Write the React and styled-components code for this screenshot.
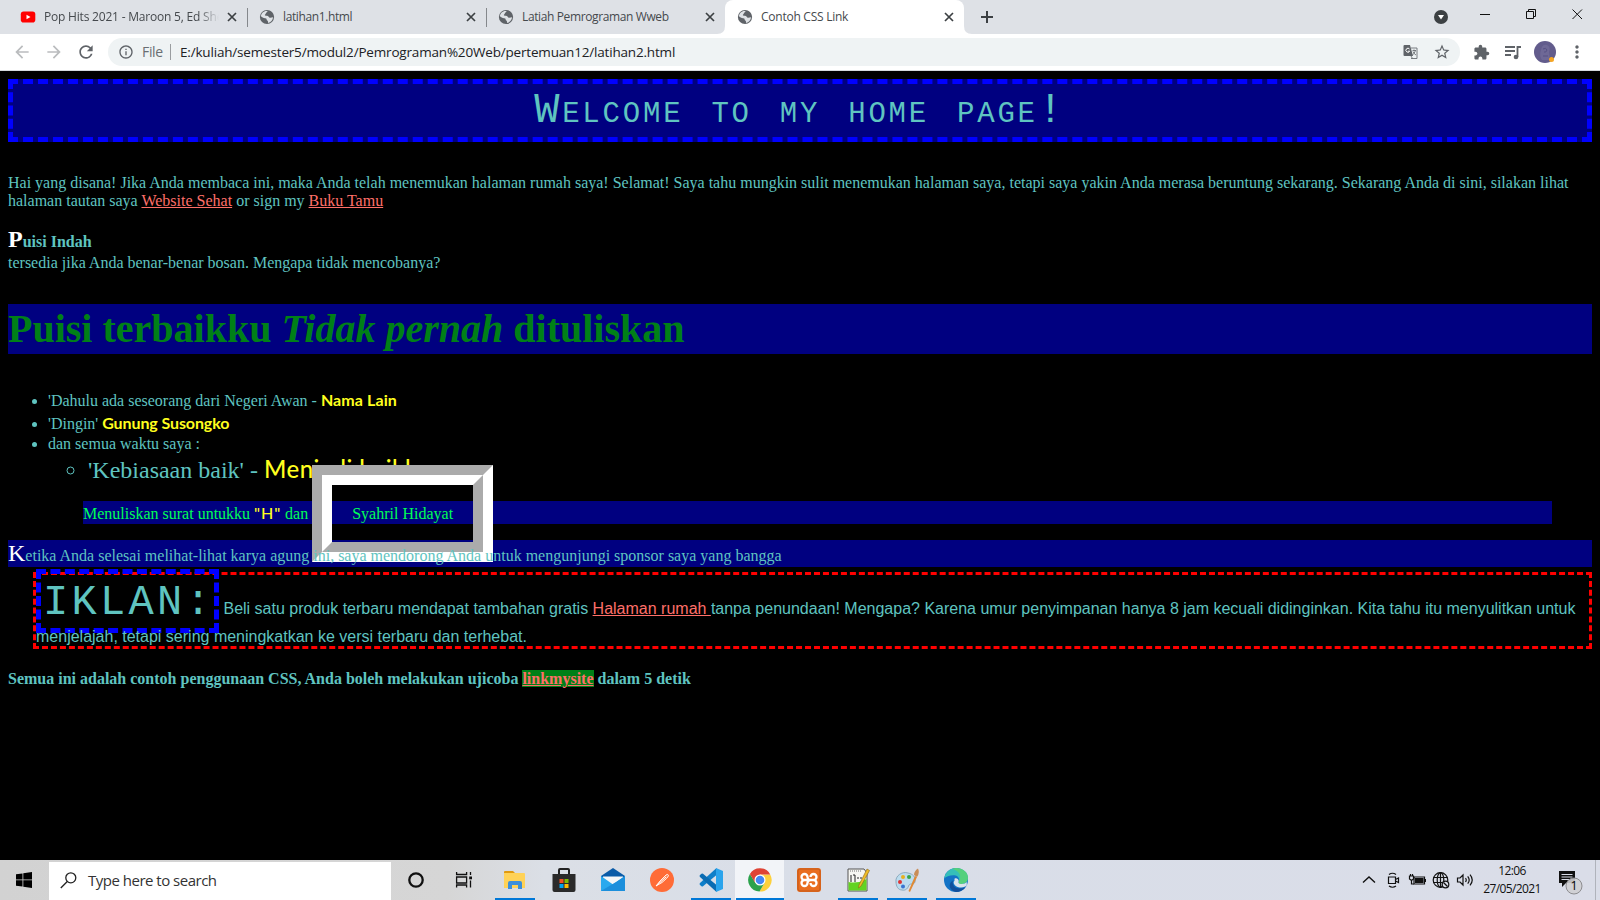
import React from "react";
import styled, { createGlobalStyle } from "styled-components";
import {
  MdArrowBack, MdArrowForward, MdRefresh, MdInfoOutline,
  MdStarBorder, MdExtension, MdMoreVert,
} from "react-icons/md";

const Global = createGlobalStyle`
  * { box-sizing: border-box; }
  body { margin: 0; background: #000; overflow: hidden; }
`;

const ui = `"Open Sans", "Noto Sans", sans-serif`;
const serif = `"Liberation Serif", "Times New Roman", serif`;
const comic = `"Comic Sans MS", Lato, sans-serif`;

const Screen = styled.div`
  width: 1600px; height: 900px; display: flex; flex-direction: column;
  background: #000; overflow: hidden;
`;

/* browser chrome */
const TabStrip = styled.div`
  height: 34px; flex: none; display: flex; background: #dee1e6; padding-left: 8px;
  font: 12px/34px ${ui}; color: #45494d;
`;
const Tab = styled.div`
  width: 239px; height: 34px; padding: 0 7px 0 12px; display: flex; align-items: center;
  background: ${(p) => (p.$active ? "#fff" : "transparent")};
  border-radius: 8px 8px 0 0; position: relative;
  &::after {
    content: ""; position: absolute; right: -1px; top: 8px; width: 1px; height: 19px;
    background: ${(p) => (p.$divider ? "#85888c" : "transparent")};
  }
`;
const Curve = styled.svg`
  position: absolute; bottom: 0; width: 8px; height: 8px; fill: #fff;
  ${(p) => (p.$right ? "right: -8px;" : "left: -8px;")}
`;
const Favicon = styled.span`
  width: 16px; height: 16px; display: flex; margin-right: 8px; flex: none; color: #5f6368;
`;
const TabTitle = styled.span`
  flex: 1; min-width: 0; overflow: hidden; white-space: nowrap; letter-spacing: ${(p) => p.$ls || 0}px;
  ${(p) => p.$fade && "-webkit-mask-image: linear-gradient(90deg,#000 88%,transparent 100%);"}
`;
const CloseX = styled.svg`
  width: 10px; height: 10px; flex: none; margin: 0 3px 0 8px; stroke: #3c4043; stroke-width: 1.7; fill: none;
`;
const Plus = styled.svg`
  width: 12px; height: 12px; margin: 11px auto 0 17px; stroke: #3c4043; stroke-width: 2;
`;
const WindowButtons = styled.svg`width: 170px; height: 34px;`;

const Toolbar = styled.div`
  height: 37px; flex: none; background: #fff; border-bottom: 1px solid #d5dadd;
  display: flex; align-items: center; padding: 0 12px; color: #5f6368;
`;
const NavButton = styled.span`
  width: 20px; height: 20px; display: flex; margin-right: 12px; font-size: 20px;
  color: ${(p) => (p.$dim ? "#babcbe" : "#5f6368")};
`;
const Omnibox = styled.div`
  width: 1352px; height: 28px; border-radius: 14px; background: #eff3f4; flex: none;
  display: flex; align-items: center; padding: 0 9px 0 10px; font: 14px/28px ${ui};
`;
const Scheme = styled.span`margin-left: 8px; color: #6a6e72; width: 28px; letter-spacing: -0.35px;`;
const Divider = styled.span`width: 1px; height: 16px; background: #9a9da0; margin-right: 9px;`;
const Url = styled.span`color: #202124; flex: 1; white-space: nowrap; letter-spacing: -0.18px; font-size: 13.5px;`;
const ToolIcon = styled.span`display: flex; font-size: ${(p) => p.$size}px; margin-left: ${(p) => p.$gap || 0}px;`;
const Avatar = styled.svg`width: 22px; height: 22px; margin-left: 12px;`;

/* document */
const Page = styled.main`
  flex: 1; min-height: 0; padding: 8px; color: #5fc4c0; background: #000;
  font: 16px/18px ${serif}; overflow: hidden;
`;
const Banner = styled.h1`
  margin: 0 0 32px; height: 63px; border: 5px dashed #00f; background: #000080; text-align: center;
  font: small-caps 400 42px/54px "Liberation Mono", monospace; letter-spacing: 2.8px;
`;
const Para = styled.p`margin: 0;`;
const Link = styled.a`
  color: #ff6f69; text-decoration: underline;
  background: ${(p) => (p.$marked ? "#008017" : "transparent")};
`;
const Lead = styled.div`
  margin-top: 17px; font-weight: bold; line-height: 25px;
  &::first-letter { font-size: 24px; color: #fff; }
`;
const PoemTitle = styled.h2`
  margin: 32px 0 35px; height: 50px; background: #000080; color: #008017;
  font: bold 40px/50px ${serif};
`;
const List = styled.ul`margin: 0; padding-left: 40px; list-style: ${(p) => p.$marker || "disc"};`;
const Item = styled.li`line-height: ${(p) => p.$lh}px; font-size: ${(p) => p.$size || 16}px;`;
const Name = styled.span`
  font-family: ${comic}; font-weight: ${(p) => p.$weight || 700}; color: #ffff1e;
  line-height: 0; letter-spacing: ${(p) => p.$ls || 0}px;
`;
const Letter = styled.blockquote`
  margin: 13px 40px 16px 75px; height: 23px; line-height: 26px; background: #000080; color: #00ff55;
  white-space: nowrap;
`;
const Framed = styled.span`border: 20px groove #fff; padding: 20px;`;
const Sponsor = styled.p`
  margin: 0; height: 27px; line-height: 26px; background: #000080;
  &::first-letter { font-size: 24px; color: #fff; }
`;
const Ad = styled.div`
  margin: 5px 0 0 25px; border: 3px dashed #f00; font: 16px/18px "Liberation Sans", Arial, sans-serif;
  height: 77px; padding-top: 4px; white-space: nowrap;
`;
const AdLabel = styled.span`
  font: 42px/49px "Liberation Mono", monospace; border: 5px dashed #00f;
  padding: 5px 0 1px 2px; letter-spacing: 3.3px;
`;
const Closing = styled.p`margin: 21px 0 0; font-weight: bold;`;

/* taskbar */
const Taskbar = styled.div`
  height: 40px; flex: none; display: flex; align-items: center;
  background: linear-gradient(90deg, #d2d2d2 0, #d6d6d6 28%, #dbdfe6 34%, #d9dee8 50%, #dadde8 100%);
  font-family: ${ui}; color: #111;
`;
const Start = styled.div`
  width: 49px; padding-right: 1px; display: flex; justify-content: center;
  svg { width: 16px; height: 16px; }
`;
const Search = styled.div`
  width: 342px; height: 38px; background: #fff; display: flex; align-items: center; padding: 0 0 1px 11px;
  font-size: 15px; color: #333; letter-spacing: -0.5px; white-space: nowrap; margin-top: 1px;
  svg { width: 17px; height: 17px; margin-right: 11px; }
`;
const TaskButton = styled.div`
  width: ${(p) => p.$w || 49}px; height: 40px; display: flex; align-items: center; justify-content: center;
  position: relative; background: ${(p) => (p.$active ? "#f2f4f8" : "transparent")};
  svg { width: 24px; height: 24px; }
  &::after {
    content: ""; position: absolute; bottom: 0; height: 2px; background: #0078d7;
    width: ${(p) => (p.$active ? 48 : p.$open ? 40 : 0)}px;
  }
`;
const Tray = styled.div`margin-left: auto; display: flex; align-items: center; height: 40px;`;
const TrayIcon = styled.svg`width: 18px; height: 18px; margin-right: 6px; fill: none; stroke: #111; stroke-width: 1.2;`;
const Clock = styled.div`
  width: 64px; text-align: center; font-size: 12px; line-height: 18px; letter-spacing: -0.6px; white-space: nowrap;
`;
const Notice = styled.svg`width: 28px; height: 28px; margin: 3px 11px 0 12px;`;
const Peek = styled.div`width: 5px; height: 40px; border-left: 1px solid #b0b3bb;`;

const Cross = () => <CloseX viewBox="0 0 10 10"><path d="M1 1l8 8M9 1l-8 8" /></CloseX>;
const Globe = () => (
  <svg viewBox="0 0 16 16" width="16" height="16">
    <circle cx="8" cy="8" r="7.1" fill="#5f6368" />
    <path d="M8.6 2.2c-.3 1.3-1.8 1.1-1.8 2.2 0 .8-1 .8-1 1.6 0 .9 2.1.6 3.1.9 1 .4.9 1.7 2 1.8 1.1.1 2.2-.4 3.2-.4-.3 2.8-2.300 5.100-5 5.700 0-1.600-.2-2-.9-2.400-.8-.5-.3-1.500-1-2C6.200 9.100 3.500 9 1.900 7.200c.3-3 3.300-5.700 6.700-5z" fill="#dfe2e6" />
    <path d="M9.500 1.800c3 .6 4.700 3.200 4.800 5.300-1 .4-2.500.3-3-.5-.4-.7.100-1.200-.700-1.500-1-.4-2.300-.5-2-1.600z" fill="#5f6368" />
  </svg>
);

const tabs = [
  { title: "Pop Hits 2021 - Maroon 5, Ed Sheeran", yt: true, divider: true, ls: -0.2 },
  { title: "latihan1.html", divider: true, ls: -0.38 },
  { title: "Latiah Pemrograman Wweb", ls: -0.38 },
  { title: "Contoh CSS Link", active: true, ls: -0.25 },
];

const icons = {
  folder: <svg viewBox="0 0 24 24"><path d="M1 4q0-1 1-1h8l2 2h-11z" fill="#e09a10" /><path d="M1 5h20q1 0 1 1v14H1z" fill="#ffd257" /><path d="M5 21v-6q0-2 2-2h10q2 0 2 2v6h-4v-4H9v4z" fill="#3b8fdc" /></svg>,
  store: <svg viewBox="0 0 24 24"><path d="M7 7V2q0-1 1-1h8q1 0 1 1v5" stroke="#222" strokeWidth="2" fill="none" /><path d="M.5 6h23v16q0 2-2 2h-19q-2 0-2-2z" fill="#2a2a2a" /><path fill="#f25022" d="M7.500 11h4v4h-4z" /><path fill="#7fba00" d="M12.500 11h4v4h-4z" /><path fill="#00a4ef" d="M7.500 16h4v4h-4z" /><path fill="#ffb900" d="M12.500 16h4v4h-4z" /></svg>,
  mail: <svg viewBox="0 0 24 24"><path d="M0 8L12 0l12 8v5H0z" fill="#0a5ba8" /><path d="M2 8.500h20v6L12 18 2 14z" fill="#f4f6f8" /><path d="M0 8l12 8.500L24 8v15H0z" fill="#2aa9ee" /><path d="M0 23L15 14 24 8v15z" fill="#1c8fdc" /></svg>,
  postman: <svg viewBox="0 0 24 24"><circle cx="12" cy="12" r="12" fill="#ff6c37" /><path d="M6 18l4-5 6-6q2-1.500 2.500.5-.5 1.500-2 3l-4.500 4z" fill="#ff8a5c" stroke="#fff" strokeWidth=".9" /><path d="M6 18l10-9" stroke="#fff" strokeWidth="1" /></svg>,
  vscode: <svg viewBox="0 0 24 24"><path d="M17.500 0L1 15q-1 1 0 2l1.500 1.200q.7.4 1.500 0L17.500 7z" fill="#0f7fc9" /><path d="M17.500 24L1 9Q0 8 1 7l1.500-1.200q.7-.4 1.500 0L17.500 17z" fill="#0a6cb3" /><path d="M17 0l7 3v18l-7 3z" fill="#2ba4ec" /></svg>,
  chrome: <svg viewBox="0 0 24 24"><path d="M12 6.500h10.200A11.500 11.500 0 0 1 11.500 23.500l5.200-9z" fill="#fdd03c" /><path d="M1.900 6A11.500 11.500 0 0 0 11.500 23.500l5.200-9H7.200z" fill="#2ba24c" /><path d="M12 6.500h10.200A11.500 11.500 0 0 0 1.900 6l5 8.500z" fill="#df4435" /><circle cx="12" cy="12" r="5.500" fill="#fff" /><circle cx="12" cy="12" r="4.300" fill="#4487f4" /></svg>,
  xampp: <svg viewBox="0 0 24 24"><rect width="24" height="24" rx="3" fill="#e96d1f" /><rect x="1" y="1" width="22" height="22" rx="2" fill="none" stroke="#b9561b" strokeWidth=".8" /><path d="M12 12H7.500a3 3 0 1 1 3-3 3 3 0 0 0 3 3H16.500a3 3 0 1 0-3-3M12 12H7.500a3 3 0 1 0 3 3 3 3 0 0 1 3-3H16.500a3 3 0 1 1-3 3" fill="none" stroke="#fff" strokeWidth="2.300" /></svg>,
  notepad: <svg viewBox="0 0 24 24"><path d="M2 1h16l3 4v18H2z" fill="#f6f6f2" stroke="#555" strokeWidth="1" /><path d="M2.500 14q9 2 18-3v11.500h-18z" fill="#62d322" /><path d="M4 3h12" stroke="#777" strokeDasharray="1 1" /><path d="M5 7v7M7 7h2v7M11 10h2m1 0h2" stroke="#222" fill="none" /><path d="M13 17L21 1l2.500 1.500L15 18l-2.500 2z" fill="#f0bd27" stroke="#8c6417" strokeWidth=".6" /></svg>,
  paint: <svg viewBox="0 0 24 24"><path d="M1 14C0 8 7 3 13 5c5 1 8 4 7 9-1 3-4 1-6 3-1 3-3 6-7 5-4 0-6-4-6-8z" fill="#bcdcee" stroke="#7c9eb4" strokeWidth=".8" /><circle cx="5" cy="14" r="2" fill="#d33" /><circle cx="8" cy="9" r="2" fill="#e8b020" /><circle cx="14" cy="9" r="2" fill="#3aa54a" /><circle cx="8" cy="18.500" r="2" fill="#3975d0" /><path d="M20 8l2 1-7 15-1.500-1z" fill="#e08a35" /><path d="M19 7q0-4 4-6.500Q25 5 22 9z" fill="#c98d57" /></svg>,
  edge: <svg viewBox="0 0 24 24"><circle cx="12" cy="12" r="12" fill="#1373c6" /><path d="M.2 10.500C1.500 3.800 6.500 0 12 0c7 0 12 4.500 12 9.600 0 4.200-3 6.400-6.400 6.400-3 0-3.600-1.300-3-2.200 1.600-2.600-.2-6.300-4.400-6.600C5.500 7 2 8.800.2 10.500z" fill="#35bfb9" /><path d="M12 0c7 0 12 4.500 12 9.600 0 4.200-3 6.400-6.400 6.400-3 0-3.600-1.300-3-2.200C18 9 16 3 8 .8z" fill="#5fd568" opacity=".75" /><path d="M8.800 12.500c-1 6 4 10 12.500 7A12 12 0 0 1 12 24C6 23 3 16 8.800 12.500z" fill="#134f9c" /><path d="M10.500 10.700c2-1.200 4.400.7 4.200 2.500-.7 1.200-.2 2.700 3 2.800 2.400 0 4-.8 5.100-2v3.600c-1 .8-3 2-5.600 2-5 0-9.500-4.200-6.700-6.900z" fill="#dbe2ec" /></svg>,
};

const pinned = [
  ["folder", true], ["store"], ["mail"], ["postman"], ["vscode", true], ["chrome", true, true],
  ["xampp"], ["notepad", true], ["paint", true], ["edge", true],
];

export default function App() {
  return (
    <Screen>
      <Global />
      <TabStrip>
        {tabs.map((t) => (
          <Tab key={t.title} $active={t.active} $divider={t.divider}>
            {t.active && (
              <>
                <Curve viewBox="0 0 8 8"><path d="M8 0v8H0Q8 8 8 0z" /></Curve>
                <Curve $right viewBox="0 0 8 8"><path d="M0 0v8h8Q0 8 0 0z" /></Curve>
              </>
            )}
            <Favicon>
              {t.yt ? (
                <svg viewBox="0 0 16 16"><rect x=".8" y="2.500" width="14.500" height="11" rx="2.800" fill="#f00" /><path d="M6.500 5.800l4 2.200-4 2.200z" fill="#fff" /></svg>
              ) : <Globe />}
            </Favicon>
            <TabTitle $ls={t.ls} $fade={t.yt}>{t.title}</TabTitle>
            <Cross />
          </Tab>
        ))}
        <Plus viewBox="0 0 12 12"><path d="M6 0v12M0 6h12" /></Plus>
        <WindowButtons viewBox="1430 0 170 34" fill="none" stroke="#111">
          <circle cx="1441" cy="17" r="7" fill="#3c4043" stroke="none" />
          <path d="M1438 15h6l-3 4.500z" fill="#fff" stroke="none" />
          <path d="M1480 14.500h10M1526.500 11.500h7v7h-7zM1528.500 11v-1.500h7v7h-2M1572.500 9.500l9.500 9.500M1582 9.500l-9.500 9.500" />
        </WindowButtons>
      </TabStrip>
      <Toolbar>
        <NavButton $dim><MdArrowBack /></NavButton>
        <NavButton $dim><MdArrowForward /></NavButton>
        <NavButton><MdRefresh /></NavButton>
        <Omnibox>
          <MdInfoOutline size={16} />
          <Scheme>File</Scheme>
          <Divider />
          <Url>E:/kuliah/semester5/modul2/Pemrograman%20Web/pertemuan12/latihan2.html</Url>
          <ToolIcon $size={15}>
            <svg width="15" height="15" viewBox="0 0 15 15">
              <path d="M1.500 0H7l3 11H1.500Q.5 11 .5 10V1q0-1 1-1z" fill="#5f6368" />
              <path d="M8 3h6v10.500H8M8 11l1.500 2.500M9.500 5.500H13M11 4.500v1M12.500 5.500q-1 3-3 4.500M10 6.500q1 2.500 3 3.500" stroke="#6b6f74" fill="none" strokeWidth=".9" />
              <path d="M6.500 4A2 2 0 1 0 6.700 6.200H5" stroke="#fff" fill="none" strokeWidth="1" />
            </svg>
          </ToolIcon>
          <ToolIcon $size={18} $gap={15}><MdStarBorder /></ToolIcon>
        </Omnibox>
        <ToolIcon $size={17} $gap={13}><MdExtension /></ToolIcon>
        <ToolIcon $size={20} $gap={14}>
          <svg width="18" height="16" viewBox="0 0 18 16" fill="none" stroke="#5f6368" strokeWidth="1.800">
            <path d="M1 3h10M1 7h10M1 11h6M13.500 13V3H17" /><circle cx="12" cy="13" r="2.300" fill="#5f6368" stroke="none" />
          </svg>
        </ToolIcon>
        <Avatar viewBox="0 0 22 22">
          <circle cx="11" cy="11" r="11" fill="#625c8c" />
          <path d="M7 9q1-6 6-5 4 2 2 7l1 8H8q-3-4-1-10z" fill="#6e6896" /><path d="M9 8q3-2 4 1-1 3-3 2M9 15h5" stroke="#575184" fill="none" />
          <circle cx="17.500" cy="18.500" r="2.500" fill="#f6a623" />
        </Avatar>
        <ToolIcon $size={20} $gap={11}><MdMoreVert /></ToolIcon>
      </Toolbar>

      <Page>
        <Banner>Welcome to my home page!</Banner>
        <Para>
          Hai yang disana! Jika Anda membaca ini, maka Anda telah menemukan halaman rumah saya! Selamat! Saya tahu
          mungkin sulit menemukan halaman saya, tetapi saya yakin Anda merasa beruntung sekarang. Sekarang Anda di
          sini, silakan lihat halaman tautan saya <Link>Website Sehat</Link> or sign my <Link>Buku Tamu</Link>
        </Para>
        <Lead>Puisi Indah</Lead>
        <Para>tersedia jika Anda benar-benar bosan. Mengapa tidak mencobanya?</Para>
        <PoemTitle>Puisi terbaikku <em>Tidak pernah</em> dituliskan</PoemTitle>
        <List>
          <Item $lh={23}>'Dahulu ada seseorang dari Negeri Awan - <Name $ls={0.1}>Nama Lain</Name></Item>
          <Item $lh={23}>'Dingin' <Name $ls={-0.1}>Gunung Susongko</Name></Item>
          <Item $lh={17}>dan semua waktu saya :
            <List $marker="circle">
              <Item $lh={36} $size={24}>'Kebiasaan baik' - <Name $weight={500} $ls={0.5}>Menjadi baikku</Name></Item>
            </List>
          </Item>
        </List>
        <Letter>Menuliskan surat untukku <Name $weight={500} $ls={0.9}>"H"</Name> dan <Framed>Syahril Hidayat</Framed></Letter>
        <Sponsor>Ketika Anda selesai melihat-lihat karya agung ini, saya mendorong Anda untuk mengunjungi sponsor saya yang bangga</Sponsor>
        <Ad>
          <AdLabel>IKLAN:</AdLabel> Beli satu produk terbaru mendapat tambahan gratis <Link>Halaman rumah </Link>tanpa
          penundaan! Mengapa? Karena umur penyimpanan hanya 8 jam kecuali didinginkan. Kita tahu itu menyulitkan untuk
          <br />menjelajah, tetapi sering meningkatkan ke versi terbaru dan terhebat.
        </Ad>
        <Closing>
          Semua ini adalah contoh penggunaan CSS, Anda boleh melakukan ujicoba <Link $marked>linkmysite</Link> dalam 5 detik
        </Closing>
      </Page>

      <Taskbar>
        <Start><svg viewBox="0 0 16 16"><path d="M0 2.300L6.500 1.400V7.500H0zM7.300 1.300L16 0v7.500H7.300zM0 8.300h6.500v6.200L0 13.700zM7.300 8.300H16V16l-8.700-1.300z" /></svg></Start>
        <Search>
          <svg viewBox="0 0 17 17" fill="none" stroke="#222" strokeWidth="1.300"><circle cx="10.800" cy="5.800" r="5" /><path d="M7.300 9.500L.8 16" /></svg>
          Type here to search
        </Search>
        <TaskButton $w={50}><svg viewBox="0 0 24 24"><circle cx="12" cy="12" r="6.700" fill="none" stroke="#111" strokeWidth="2.300" /></svg></TaskButton>
        <TaskButton $w={48}><svg viewBox="0 0 24 24" fill="none" stroke="#111" strokeWidth="1.300"><path d="M3.600 4v2.500h10V4M3.600 19.500V17h10v2.500M3.600 9h10v6h-10zM17.500 4v3M17.500 12.500v7" /><path d="M16.200 8.500h2.800v2.800h-2.800z" fill="#111" stroke="none" /></svg></TaskButton>
        <TaskButton $w={1} />
        {pinned.map(([name, open, active]) => <TaskButton key={name} $open={open} $active={active}>{icons[name]}</TaskButton>)}
        <Tray>
          <TrayIcon viewBox="0 0 18 18"><path d="M3 11.500L9 6l6 5.500" strokeWidth="1.400" /></TrayIcon>
          <TrayIcon viewBox="0 0 18 18"><path d="M4.500 6h7v6.500h-7zM11.500 8.500L14.500 7v4.500l-3-1.500M5 3.500Q8.500 1 12 3.500M5 15q3.500 2.500 7 0" /></TrayIcon>
          <TrayIcon viewBox="0 0 18 18"><path d="M6 6h10.500v7H6zM17.500 8v3" /><path d="M7.500 7.500h7.500v4h-7.500z" fill="#111" /><path d="M1.500 5h4v3l-2 1.500-2-1.500zM2.500 5V3M4.500 5V3M3.500 9v4H6" /></TrayIcon>
          <TrayIcon viewBox="0 0 18 18"><circle cx="8.500" cy="9" r="7.300" /><ellipse cx="8.500" cy="9" rx="3.300" ry="7.300" /><path d="M1.500 6.500h14M1.500 11.500h9M8.500 2v14" /><circle cx="13.500" cy="13.500" r="3.300" fill="#dadde8" /><path d="M11.500 11.500l4 4" /></TrayIcon>
          <TrayIcon viewBox="0 0 18 18"><path d="M1.500 7h2.500l3-3v10l-3-3H1.500zM9.500 7q1.500 2 0 4M11.700 5.300q3 3.700 0 7.400M14 3.700q4.500 5.300 0 10.600" /></TrayIcon>
          <Clock>12:06<br />27/05/2021</Clock>
          <Notice viewBox="0 0 28 28">
            <path d="M3 3h16v12H10l-4 4v-4H3z" fill="#111" /><path d="M5.500 6.500h11M5.500 9h11M5.500 11.500h8" stroke="#dadde8" />
            <circle cx="18" cy="18" r="8" fill="#cfcfd3" fillOpacity=".9" stroke="#8d8d90" />
            <text x="18" y="22" fontSize="12.500" textAnchor="middle" fontFamily="Open Sans">1</text>
          </Notice>
          <Peek />
        </Tray>
      </Taskbar>
    </Screen>
  );
}
